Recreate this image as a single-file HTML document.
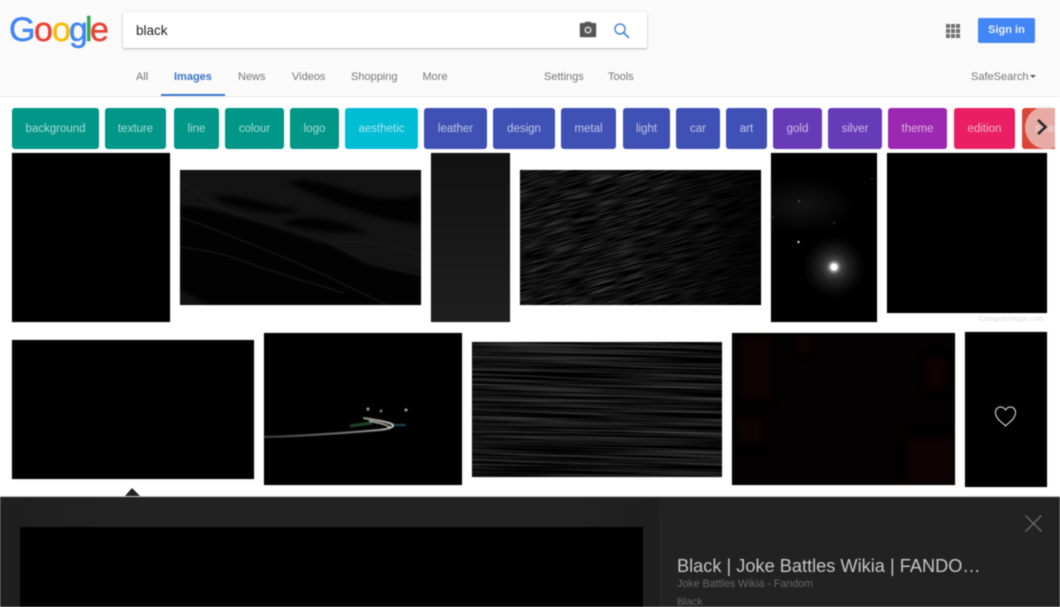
<!DOCTYPE html>
<html><head><meta charset="utf-8"><style>
html,body{margin:0;padding:0;width:1060px;height:607px;overflow:hidden;background:#fff;font-family:"Liberation Sans",sans-serif}
#w{position:absolute;left:0;top:0;width:1060px;height:607px;overflow:hidden;background:#fff;filter:blur(.4px)}
.a{position:absolute}
#hd{left:0;top:0;width:1060px;height:96px;background:#fafafa;border-bottom:1px solid #ebebeb}
.t{position:absolute;top:70px;font-size:11px;line-height:14px;color:#777;white-space:nowrap}
.c{position:absolute;top:108px;height:41px;line-height:42px;text-align:center;font-size:11.5px;color:rgba(255,255,255,.66);border-radius:3px;white-space:nowrap;overflow:hidden}
.i{position:absolute;background:#000;box-shadow:0 0 1px rgba(0,0,0,.35)}
.i svg{display:block}
</style></head><body><div id="w">
<div class="a" id="hd"></div>
<svg class="a" style="left:0;top:0" width="120" height="56"><text y="41" font-family="Liberation Sans" font-size="34" stroke-width=".5" x="9 34 52 69 85 90"><tspan fill="#4285f4" stroke="#4285f4">G</tspan><tspan fill="#ea4335" stroke="#ea4335">o</tspan><tspan fill="#fbbc05" stroke="#fbbc05">o</tspan><tspan fill="#4285f4" stroke="#4285f4">g</tspan><tspan fill="#34a853" stroke="#34a853">l</tspan><tspan fill="#ea4335" stroke="#ea4335">e</tspan></text></svg>
<div class="a" style="left:123px;top:12px;width:524px;height:36px;background:#fff;border-radius:1px;box-shadow:0 1px 2px rgba(0,0,0,.28),0 0 1px rgba(0,0,0,.12)"></div>
<div class="a" style="left:136px;top:22px;font-size:13.5px;line-height:18px;color:#222">black</div>
<svg class="a" style="left:578px;top:21px" width="20" height="18" viewBox="0 0 20 18"><path d="M6.500 2 L7.500.8 H12.500 L13.500 2 H17 A1.200 1.200 0 0 1 18.200 3.200 V15 A1.200 1.200 0 0 1 17 16.200 H3 A1.200 1.200 0 0 1 1.800 15 V3.200 A1.200 1.200 0 0 1 3 2 Z" fill="#555"/><circle cx="10" cy="9" r="2.800" fill="none" stroke="#ddd" stroke-width="1.500"/></svg>
<svg class="a" style="left:613px;top:22px" width="18" height="18" viewBox="0 0 18 18"><circle cx="7" cy="7" r="5" fill="none" stroke="#4a86d8" stroke-width="1.500"/><path d="M10.700 10.700 L16 16" stroke="#4a86d8" stroke-width="1.800"/></svg>
<svg class="a" style="left:946px;top:24px" width="14" height="14" fill="#707070"><rect width="4" height="4"/><rect x="5" width="4" height="4"/><rect x="10" width="4" height="4"/><rect y="5" width="4" height="4"/><rect x="5" y="5" width="4" height="4"/><rect x="10" y="5" width="4" height="4"/><rect y="10" width="4" height="4"/><rect x="5" y="10" width="4" height="4"/><rect x="10" y="10" width="4" height="4"/></svg>
<div class="a" style="left:978px;top:18px;width:57px;height:25px;line-height:25px;background:#4285f4;border-radius:2px;color:#e8f0fe;font-size:11px;font-weight:bold;text-align:center">Sign in</div>
<div class="t" style="left:136px">All</div>
<div class="t" style="left:174px;color:#3a74c6;font-weight:bold">Images</div>
<div class="a" style="left:161px;top:94px;width:64px;height:2px;background:#3b78c9"></div>
<div class="t" style="left:238px">News</div>
<div class="t" style="left:292px">Videos</div>
<div class="t" style="left:351px">Shopping</div>
<div class="t" style="left:422.500px">More</div>
<div class="t" style="left:544px">Settings</div>
<div class="t" style="left:608px">Tools</div>
<div class="t" style="left:971px">SafeSearch</div>
<div class="a" style="left:1030px;top:75px;border:3px solid transparent;border-top:3px solid #555;border-bottom:0"></div>

<div class="c" style="left:12px;width:87px;background:#009688">background</div>
<div class="c" style="left:105px;width:61px;background:#009688">texture</div>
<div class="c" style="left:174px;width:45px;background:#009688">line</div>
<div class="c" style="left:225px;width:59px;background:#009688">colour</div>
<div class="c" style="left:290px;width:49px;background:#009688">logo</div>
<div class="c" style="left:345px;width:73px;background:#00bcd4">aesthetic</div>
<div class="c" style="left:424px;width:63px;background:#3f51b5">leather</div>
<div class="c" style="left:493px;width:62px;background:#3f51b5">design</div>
<div class="c" style="left:561px;width:55px;background:#3f51b5">metal</div>
<div class="c" style="left:623px;width:47px;background:#3f51b5">light</div>
<div class="c" style="left:676px;width:44px;background:#3f51b5">car</div>
<div class="c" style="left:726px;width:41px;background:#3f51b5">art</div>
<div class="c" style="left:773px;width:49px;background:#673ab7">gold</div>
<div class="c" style="left:828px;width:54px;background:#673ab7">silver</div>
<div class="c" style="left:888px;width:59px;background:#9c27b0">theme</div>
<div class="c" style="left:954px;width:61px;background:#e91e63">edition</div>
<div class="c" style="left:1022px;width:38px;background:#db4437;text-align:left;text-indent:13px">season</div>
<div class="a" style="left:1055px;top:100px;width:5px;height:53px;background:#fff"></div>
<div class="a" style="left:1025px;top:106px;width:43px;height:43px;border-radius:50%;background:rgba(240,232,230,.62);clip-path:inset(0 13px 0 0)"></div>
<svg class="a" style="left:1035px;top:118px" width="14" height="18"><path d="M3 2 L10.500 9 L3 16" fill="none" stroke="#2b2b2b" stroke-width="2.600"/></svg>

<div class="i" style="left:12px;top:153px;width:158px;height:169px"></div>

<div class="i" style="left:180px;top:170px;width:241px;height:135px;background:#131313"><svg width="241" height="135"><defs><filter id="b1" color-interpolation-filters="sRGB"><feGaussianBlur stdDeviation="2.500"/></filter><filter id="b2" color-interpolation-filters="sRGB"><feGaussianBlur stdDeviation=".6"/></filter></defs>
<g filter="url(#b1)" fill="#020202"><path d="M107 12C140 5 170 25 200 28 220 30 240 25 241 25V55C200 50 150 35 107 12Z"/><path d="M33 27C60 22 95 38 123 40 105 46 60 44 33 27Z"/><path d="M100 53C125 42 165 50 187 63 155 64 125 60 100 53Z"/><path d="M0 35C40 38 100 60 150 75L190 95 241 105V135H160L0 80Z"/><path d="M0 50L140 103 207 135H30L0 120Z"/></g>
<g filter="url(#b2)" fill="none" stroke="#1e1e1e" stroke-width="1"><path d="M0 47C50 65 100 85 140 103 165 115 190 127 207 135"/><path d="M0 77C20 80 40 82 60 90 90 102 130 112 163 123"/><path d="M0 33C15 34 30 34 45 40 80 52 120 62 150 73 170 82 180 90 190 93 210 98 225 102 241 105"/><path d="M0 12C15 20 25 30 37 37"/><path d="M150 73C185 70 215 75 241 85"/></g></svg></div>

<div class="i" style="left:431px;top:153px;width:79px;height:169px;background:linear-gradient(#131212,#1f1f20)"></div>

<div class="i" style="left:520px;top:170px;width:241px;height:135px;overflow:hidden"><svg width="241" height="135"><defs><filter id="f1" x="0" y="0" width="100%" height="100%" color-interpolation-filters="sRGB"><feTurbulence type="fractalNoise" baseFrequency="0.035 0.75" numOctaves="2" seed="4"/><feColorMatrix values=".5 0 0 0 -.18 .5 0 0 0 -.18 .5 0 0 0 -.18 0 0 0 0 1"/></filter><linearGradient id="g1" x1="0" x2="1"><stop offset=".5" stop-color="#000" stop-opacity="0"/><stop offset="1" stop-color="#000" stop-opacity=".8"/></linearGradient></defs>
<g transform="rotate(-16 120 67)"><rect x="-60" y="-60" width="380" height="260" filter="url(#f1)"/></g><rect width="241" height="135" fill="url(#g1)"/></svg></div>

<div class="i" style="left:771px;top:153px;width:106px;height:169px;overflow:hidden"><svg width="106" height="169"><defs><radialGradient id="g2"><stop offset="0" stop-color="#fff"/><stop offset=".09" stop-color="#fff"/><stop offset=".14" stop-color="#999"/><stop offset=".24" stop-color="#444"/><stop offset=".45" stop-color="#222"/><stop offset=".75" stop-color="#0c0c0c"/><stop offset="1" stop-color="#000"/></radialGradient><radialGradient id="g3"><stop offset="0" stop-color="#141414"/><stop offset="1" stop-color="#000"/></radialGradient></defs>
<ellipse cx="30" cy="52" rx="55" ry="28" fill="url(#g3)"/><circle cx="63" cy="114" r="31" fill="url(#g2)"/><circle cx="27.500" cy="89" r="1.200" fill="#ccc"/><circle cx="28" cy="48" r="1" fill="#555"/><circle cx="63" cy="70" r=".8" fill="#555"/><circle cx="101" cy="26" r=".8" fill="#444"/><circle cx="2" cy="64" r=".8" fill="#444"/></svg></div>

<div class="i" style="left:887px;top:153px;width:160px;height:160px"></div>
<div class="a" style="left:979px;top:314px;font-size:7.2px;line-height:9px;color:#d8d8d8;white-space:nowrap">ComputerHope.com</div>

<div class="i" style="left:12px;top:340px;width:242px;height:139px;background:#010101"></div>

<div class="i" style="left:264px;top:333px;width:198px;height:152px;overflow:hidden"><svg width="198" height="152"><defs><filter id="b3" color-interpolation-filters="sRGB"><feGaussianBlur stdDeviation=".6"/></filter><linearGradient id="g4" gradientUnits="userSpaceOnUse" x1="0" x2="130" y1="0" y2="0"><stop offset="0" stop-color="#555"/><stop offset=".7" stop-color="#aaa"/><stop offset="1" stop-color="#eee"/></linearGradient></defs><g filter="url(#b3)"><path d="M86 93L108 90" stroke="#1f4a28" stroke-width="3"/><path d="M128 92L142 92" stroke="#1e4a56" stroke-width="2"/><path d="M0 104C40 103 80 100 115 97 125 96 130 94 129 92 126 89 112 87 99 85" fill="none" stroke="url(#g4)" stroke-width="1.600"/><path d="M105 88C115 90 122 91 127 95" fill="none" stroke="#e8dcd8" stroke-width="1.300"/><circle cx="104" cy="76" r="1.400" fill="#ccc"/><circle cx="117" cy="78" r="1.200" fill="#bbb"/><circle cx="142" cy="77" r="1.400" fill="#ccc"/></g></svg></div>

<div class="i" style="left:472px;top:342px;width:250px;height:135px;overflow:hidden"><svg width="250" height="135"><defs><filter id="f2" x="0" y="0" width="100%" height="100%" color-interpolation-filters="sRGB"><feTurbulence type="fractalNoise" baseFrequency="0.006 0.4" numOctaves="3" seed="7"/><feColorMatrix values=".5 0 0 0 -.17 .5 0 0 0 -.17 .5 0 0 0 -.17 0 0 0 0 1"/></filter></defs><g transform="rotate(1.500 125 67)"><rect x="-20" y="-20" width="290" height="175" filter="url(#f2)"/></g></svg></div>

<div class="i" style="left:732px;top:333px;width:223px;height:152px;overflow:hidden;background:#030101"><svg width="223" height="152"><defs><filter id="b4" color-interpolation-filters="sRGB"><feGaussianBlur stdDeviation="4"/></filter></defs><g filter="url(#b4)" fill="#0e0303"><rect x="8" y="5" width="32" height="60"/><rect x="5" y="85" width="25" height="25"/><rect x="195" y="25" width="18" height="30"/><rect x="175" y="105" width="48" height="47"/><rect x="65" y="3" width="14" height="16"/></g></svg></div>

<div class="i" style="left:965px;top:332px;width:82px;height:155px"><svg width="82" height="155"><path d="M40.500 94C38 91 30.500 87 30.500 80.500 30.500 76.500 33.500 75 35.500 75 37.800 75 39.500 76.300 40.500 78 41.500 76.300 43.200 75 45.500 75 47.500 75 50.500 76.500 50.500 80.500 50.500 87 43 91 40.500 94Z" fill="none" stroke="#c8c8c8" stroke-width="1.200"/></svg></div>

<svg class="a" style="left:122px;top:487px" width="20" height="11"><path d="M2 10L10 1 19 10Z" fill="#222"/></svg>
<div class="a" style="left:0;top:496px;width:1060px;height:111px;background:linear-gradient(90deg,#1f1f1f 0,#222 10%,#222 55%,#1e1e1e 62%,#222 62.300%);border-top:1px solid #c8c8c8;box-sizing:border-box"></div>
<div class="a" style="left:20px;top:527px;width:623px;height:80px;background:#010101"></div>
<div class="a" style="left:660px;top:515px;width:1px;height:92px;background:#2a2a2a"></div>
<svg class="a" style="left:1024px;top:514px" width="19" height="19"><path d="M1.500 1.500L17.500 17.500M17.500 1.500L1.500 17.500" stroke="#6b6b6b" stroke-width="1.300"/></svg>
<div class="a" style="left:677px;top:555px;font-size:18.2px;line-height:22px;color:#c4c4c4;white-space:nowrap">Black | Joke Battles Wikia | FANDO…</div>
<div class="a" style="left:677px;top:578px;font-size:10.7px;line-height:13px;color:#666;white-space:nowrap">Joke Battles Wikia - Fandom</div>
<div class="a" style="left:677px;top:596px;font-size:10.5px;line-height:13px;color:#666;white-space:nowrap">Black</div>
</div></body></html>
